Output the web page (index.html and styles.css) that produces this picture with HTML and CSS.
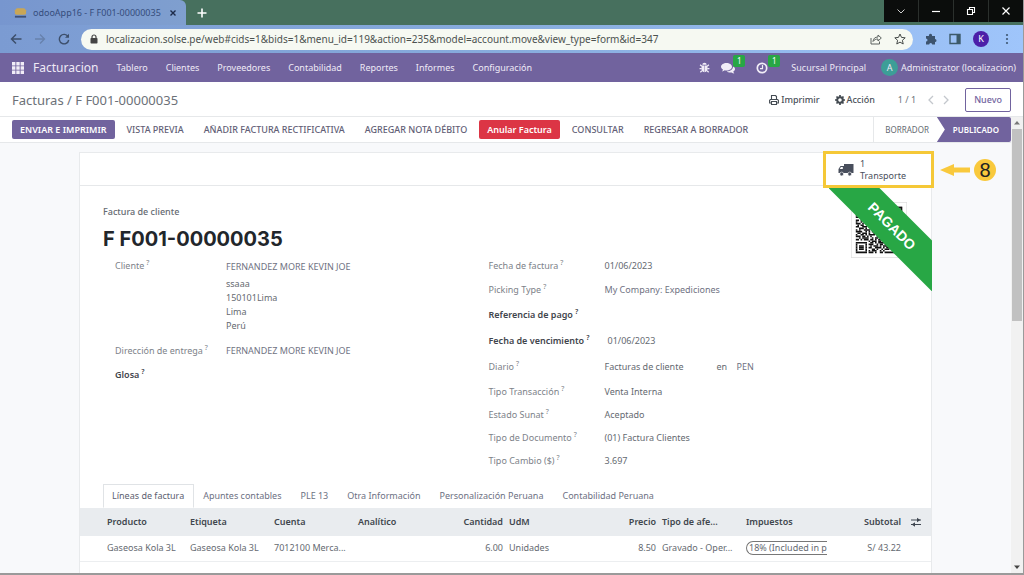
FILE: index.html
```html
<!DOCTYPE html>
<html lang="es">
<head>
<meta charset="utf-8">
<title>odooApp16 - F F001-00000035</title>
<link rel="stylesheet" href="styles.css">
</head>
<body>
<div class="window">
  <div class="tabstrip">
    <div class="browser-tab">
      <svg class="favicon" viewBox="0 0 14 12" aria-hidden="true"><path d="M3 1h8l2 2v4l-2 1H3L1 7V3z" fill="#c9a656"/><path d="M1 9h12v2H1z" fill="#3d5078"/></svg>
      <span class="browser-title">odooApp16 - F F001-00000035</span>
      <button class="plain tab-close" aria-label="Cerrar pestaña"><svg viewBox="0 0 8 8"><path d="M1.500 1.500l5 5M6.500 1.500l-5 5" stroke="#1d2b49" stroke-width="1.400"/></svg></button>
    </div>
    <button class="plain tab-new" aria-label="Nueva pestaña"><svg viewBox="0 0 10 10"><path d="M5 .5v9M.5 5h9" stroke="#fff" stroke-width="1.600"/></svg></button>
    <div class="window-controls">
      <button aria-label="Buscar pestañas"><svg viewBox="0 0 10 10"><path d="M1.500 3.500L5 7l3.500-3.500" stroke="#cfcfcf" fill="none"/></svg></button>
      <button aria-label="Minimizar"><svg viewBox="0 0 10 10"><path d="M1 5.500h8" stroke="#fff" stroke-width="1.200"/></svg></button>
      <button aria-label="Restaurar"><svg viewBox="0 0 10 10"><path d="M1.500 3.500h5v5h-5zM3.500 3.500v-2h5v5h-2" stroke="#fff" fill="none" stroke-width="1.100"/></svg></button>
      <button aria-label="Cerrar"><svg viewBox="0 0 10 10"><path d="M1.500 1.500l7 7M8.500 1.500l-7 7" stroke="#fff" stroke-width="1.200"/></svg></button>
    </div>
  </div>

  <div class="toolbar">
    <button class="plain" aria-label="Atrás"><svg class="i12" viewBox="0 0 12 12"><path d="M11.500 6H1.500M6 1.500L1.500 6 6 10.500" stroke="#3d4f6b" fill="none" stroke-width="1.500"/></svg></button>
    <button class="plain" aria-label="Adelante"><svg class="i12" viewBox="0 0 12 12"><path d="M1 6h9.500M6 1.500L10.500 6 6 10.500" stroke="#6781ac" fill="none" stroke-width="1.300"/></svg></button>
    <button class="plain" aria-label="Recargar"><svg class="i12" viewBox="0 0 12 12"><path d="M10 3.500A4.700 4.700 0 1 0 10.700 7" stroke="#3d4f6b" fill="none" stroke-width="1.400"/><path d="M11 .8v4H7z" fill="#3d4f6b"/></svg></button>
    <div class="address">
      <svg class="lock" viewBox="0 0 8 10" aria-hidden="true"><path d="M2 4.500V3a2 2 0 0 1 4 0v1.500" stroke="#444" fill="none" stroke-width="1.200"/><rect x=".5" y="4" width="7" height="5.500" rx=".8" fill="#444"/></svg>
      <input class="url" aria-label="Dirección" value="localizacion.solse.pe/web#cids=1&amp;bids=1&amp;menu_id=119&amp;action=235&amp;model=account.move&amp;view_type=form&amp;id=347">
      <button class="plain" aria-label="Compartir"><svg class="i12" viewBox="0 0 12 12"><path d="M1 5v6h8.500V8.500M3 8.500c.3-3 2-4.500 5-4.500V2l3.300 3L8 8V6C6 6 4.200 6.700 3 8.500z" stroke="#5d6360" fill="none"/></svg></button>
      <button class="plain" aria-label="Favorito"><svg class="i12" viewBox="0 0 12 12"><path d="M6 1l1.500 3.400 3.700.4-2.800 2.500.8 3.700L6 9.100 2.800 11l.8-3.700L.8 4.800l3.700-.4z" stroke="#454a48" fill="none"/></svg></button>
    </div>
    <button class="plain" aria-label="Extensiones"><svg class="i12" viewBox="0 0 12 12"><path d="M1 3h3a1.600 1.600 0 1 1 3 0h3v3a1.500 1.500 0 1 1 0 3v2.500H7.200a1.500 1.500 0 0 0-3 0H1V8.400a1.500 1.500 0 0 0 0-3z" fill="#3c536e"/></svg></button>
    <button class="plain" aria-label="Panel lateral"><svg class="i12" viewBox="0 0 12 12"><path d="M1 1.500h10v9H1z" stroke="#3c5a6a" fill="none" stroke-width="1.400"/><path d="M7.500 1.500H11v9H7.500z" fill="#3c5a6a"/></svg></button>
    <button class="profile" aria-label="Perfil">K</button>
    <button class="plain" aria-label="Menú"><svg class="i12" viewBox="0 0 12 12"><g fill="#3f5774"><circle cx="6" cy="2" r="1.100"/><circle cx="6" cy="6" r="1.100"/><circle cx="6" cy="10" r="1.100"/></g></svg></button>
  </div>

  <nav class="navbar">
    <button class="plain apps" aria-label="Aplicaciones"><svg class="i12" viewBox="0 0 12 12"><path d="M0 0h3.400v3.400H0zM4.300 0h3.400v3.400H4.300zM8.600 0H12v3.400H8.600zM0 4.300h3.400v3.400H0zM4.300 4.300h3.400v3.400H4.300zM8.600 4.300H12v3.400H8.600zM0 8.600h3.400V12H0zM4.300 8.600h3.400V12H4.300zM8.600 8.600H12V12H8.600z" fill="#f1edf7"/></svg></button>
    <a class="brand" href="#">Facturacion</a>
    <div class="menu">
      <a href="#">Tablero</a><a href="#">Clientes</a><a href="#">Proveedores</a><a href="#">Contabilidad</a><a href="#">Reportes</a><a href="#">Informes</a><a href="#">Configuración</a>
    </div>
    <div class="systray">
      <button class="plain" aria-label="Depurar"><svg class="bug" viewBox="0 0 10 10"><path d="M3 2.600a2 2 0 0 1 4 0zM2.300 3.200h2.500v6.200C3 9.200 2.300 8 2.300 6zM5.200 3.200h2.500V6c0 2-.7 3.200-2.500 3.400z" fill="#f1edf7"/><path d="M.5 6h2M7.500 6h2M1 2.500l1.500 1.300M9 2.500L7.500 3.800M1.200 9.300L2.700 8M8.800 9.300L7.300 8" stroke="#f1edf7" stroke-width="1.100"/></svg></button>
      <button class="plain tray" aria-label="Mensajes"><svg class="i14" viewBox="0 0 14 12"><path d="M5.500 1C8.500 1 11 2.700 11 4.800S8.500 8.500 5.500 8.500c-.6 0-1.200 0-1.700-.2-.8.700-1.800 1-2.900 1.100.6-.6 1-1.100 1.100-1.900C.8 6.900 0 5.900 0 4.800 0 2.700 2.500 1 5.500 1z" fill="#f1edf7"/><path d="M12 4.500c1.200.6 2 1.500 2 2.600s-.7 1.900-1.700 2.500c.1.700.5 1.300 1 1.900-1 0-2-.5-2.800-1.100-1.700.3-3.600 0-4.700-.9C9.500 9.300 12 7.500 12 4.500z" fill="#f1edf7"/></svg><span class="count">1</span></button>
      <button class="plain tray" aria-label="Actividades"><svg class="i12" viewBox="0 0 12 12"><circle cx="6" cy="6" r="4.700" stroke="#f1edf7" stroke-width="1.700" fill="none"/><path d="M6.500 3v3.700H4" stroke="#f1edf7" stroke-width="1.200" fill="none"/></svg><span class="count">1</span></button>
      <a class="company" href="#">Sucursal Principal</a>
      <a class="user" href="#"><span class="avatar">A</span>Administrator (localizacion)</a>
    </div>
  </nav>

  <header class="control">
    <div class="crumbs"><a href="#">Facturas</a> / <span>F F001-00000035</span></div>
    <div class="control-actions">
      <button class="plain action"><svg class="i10" viewBox="0 0 10 10"><path d="M2.500 4.500v-4h4l1 1v3M2.500 8H.6V5.200L1.500 4.500h7l.9.700V8H7.500M2.500 6.500h5v3h-5z" stroke="#444b52" fill="none" stroke-width="1.100"/></svg>Imprimir</button>
      <button class="plain action"><svg class="i10" viewBox="0 0 10 10"><circle cx="5" cy="5" r="2.800" stroke="#444b52" stroke-width="2.100" fill="none"/><path d="M5 0v2M5 8v2M0 5h2M8 5h2M1.500 1.500l1.300 1.300M7.200 7.200l1.300 1.300M8.500 1.500L7.200 2.800M2.800 7.200L1.500 8.500" stroke="#444b52" stroke-width="1.700"/></svg>Acción</button>
      <span class="pager">1 / 1</span>
      <button class="plain prev" aria-label="Anterior"><svg class="i10" viewBox="0 0 10 10"><path d="M7 1L3 5l4 4" stroke="#c3c7cc" fill="none" stroke-width="1.300"/></svg></button>
      <button class="plain" aria-label="Siguiente"><svg class="i10" viewBox="0 0 10 10"><path d="M3 1l4 4-4 4" stroke="#c3c7cc" fill="none" stroke-width="1.300"/></svg></button>
      <button class="new">Nuevo</button>
    </div>
  </header>

  <div class="viewport">
    <main class="form">
      <div class="statusbar">
        <button class="btn primary">ENVIAR E IMPRIMIR</button>
        <button class="btn">VISTA PREVIA</button>
        <button class="btn">AÑADIR FACTURA RECTIFICATIVA</button>
        <button class="btn">AGREGAR NOTA DÉBITO</button>
        <button class="btn danger">Anular Factura</button>
        <button class="btn">CONSULTAR</button>
        <button class="btn">REGRESAR A BORRADOR</button>
        <div class="stages"><span class="stage">BORRADOR</span><span class="stage current">PUBLICADO</span></div>
      </div>

      <div class="canvas">
        <section class="sheet">
          <div class="button-box">
            <button class="stat">
              <svg class="truck" viewBox="0 0 16 14" aria-hidden="true"><path d="M6 1h9.500v9H6zM.5 6l2-3H6v7H.5z" fill="#484e5c"/><path d="M1.700 6l1.200-1.900h1.900V6z" fill="#fff"/><circle cx="3.700" cy="11" r="1.900" fill="#484e5c" stroke="#fff" stroke-width=".6"/><circle cx="11.700" cy="11" r="1.900" fill="#484e5c" stroke="#fff" stroke-width=".6"/></svg>
              <span>1<br>Transporte</span>
            </button>
            <div class="callout"><svg class="arrow" viewBox="0 0 30 14" aria-hidden="true"><path d="M0 7l14-6v3.500h16v5H14V13z" fill="#f9c93c"/></svg><span class="step">8</span></div>
          </div>

          <div class="sheet-body">
            <svg class="qr" viewBox="-3 -3 35 35" aria-label="Código QR">
              <path d="M-3-3h35v35H-3z" fill="#fff" stroke="#dedede" stroke-width=".8"/>
              <g stroke="#111" stroke-width="1">
                <path d="M0 .5h29" stroke-dasharray="7 2 1 1 3 1 2 1 3 1"/><path d="M0 1.500h29" stroke-dasharray="1 5 1 2 2 1 1 3 2 1"/><path d="M0 2.500h29" stroke-dasharray="1 1 3 1 1 1 3 2 1 1"/><path d="M0 3.500h29" stroke-dasharray="1 1 3 1 1 2 1 1 2 1 3 1"/><path d="M0 4.500h29" stroke-dasharray="1 1 3 1 1 1 2 3 1 2"/><path d="M0 5.500h29" stroke-dasharray="1 5 1 3 1 1 2 2"/><path d="M0 6.500h29" stroke-dasharray="7 1 1 1 1 1 1 1"/><path d="M8 7.500h21" stroke-dasharray="2 1 1 2 3 1"/>
                <path d="M0 8.500h29" stroke-dasharray="2 1 4 1 1 2 3 2"/><path d="M0 9.500h29" stroke-dasharray="1 2 1 1 3 2 1 1"/><path d="M0 10.500h29" stroke-dasharray="3 1 1 1 1 2 4 1"/><path d="M1 11.500h28" stroke-dasharray="1 1 2 2 3 1 1 3"/><path d="M0 12.500h29" stroke-dasharray="2 2 3 1 1 1 2 1"/><path d="M2 13.500h27" stroke-dasharray="3 1 1 2 2 1"/><path d="M0 14.500h29" stroke-dasharray="1 1 1 2 4 1 2 1"/><path d="M0 15.500h29" stroke-dasharray="4 2 1 1 1 1 3 2"/><path d="M1 16.500h28" stroke-dasharray="2 1 3 1 1 2"/><path d="M0 17.500h29" stroke-dasharray="1 2 2 1 1 1 4 2"/><path d="M0 18.500h29" stroke-dasharray="3 1 2 1 1 1 1 3"/><path d="M2 19.500h27" stroke-dasharray="1 1 4 2 1 1 2 1"/><path d="M0 20.500h29" stroke-dasharray="2 1 1 1 3 1"/>
                <path d="M8 21.500h21" stroke-dasharray="1 1 3 1 2 2"/><path d="M0 22.500h29" stroke-dasharray="7 2 2 1 1 1 4 1"/><path d="M0 23.500h29" stroke-dasharray="1 5 1 1 3 2 1 1 2 1"/><path d="M0 24.500h29" stroke-dasharray="1 1 3 1 1 2 1 1 3 1"/><path d="M0 25.500h29" stroke-dasharray="1 1 3 1 1 1 2 2 4 1"/><path d="M0 26.500h29" stroke-dasharray="1 1 3 1 1 3 2 1 1 2"/><path d="M0 27.500h29" stroke-dasharray="1 5 1 1 1 1 3 2 1 1"/><path d="M0 28.500h29" stroke-dasharray="7 1 3 1 1 2 2 1"/>
              </g>
              <path d="M22 0h7v7h-7z" fill="#fff"/><path d="M22.500.5h6v6h-6z" fill="none" stroke="#111"/><path d="M24 2h3v3h-3z" fill="#111"/>
            </svg>
            <div class="ribbon"><span>PAGADO</span></div>

            <p class="kind">Factura de cliente</p>
            <h1>F F001-00000035</h1>

            <div class="groups">
              <dl class="group left">
                <dt>Cliente<sup>?</sup></dt>
                <dd class="client"><a href="#">FERNANDEZ MORE KEVIN JOE</a><address>ssaaa<br>150101Lima<br>Lima<br>Perú</address></dd>
                <dt>Dirección de entrega<sup>?</sup></dt><dd><a href="#">FERNANDEZ MORE KEVIN JOE</a></dd>
                <dt class="strong">Glosa<sup>?</sup></dt><dd></dd>
              </dl>
              <dl class="group right">
                <dt>Fecha de factura<sup>?</sup></dt><dd>01/06/2023</dd>
                <dt>Picking Type<sup>?</sup></dt><dd><a href="#">My Company: Expediciones</a></dd>
                <dt class="strong tall">Referencia de pago<sup>?</sup></dt><dd></dd>
                <dt class="strong tall">Fecha de vencimiento<sup>?</sup></dt><dd class="editable">01/06/2023</dd>
                <dt class="tall">Diario<sup>?</sup></dt><dd class="journal"><span>Facturas de cliente</span><span>en</span><a href="#">PEN</a></dd>
                <dt class="short">Tipo Transacción<sup>?</sup></dt><dd>Venta Interna</dd>
                <dt class="short">Estado Sunat<sup>?</sup></dt><dd>Aceptado</dd>
                <dt class="short">Tipo de Documento<sup>?</sup></dt><dd>(01) Factura Clientes</dd>
                <dt class="short">Tipo Cambio ($)<sup>?</sup></dt><dd>3.697</dd>
              </dl>
            </div>

            <div class="tabs" role="tablist">
              <button class="tab active" role="tab">Líneas de factura</button><button class="tab" role="tab">Apuntes contables</button><button class="tab" role="tab">PLE 13</button><button class="tab" role="tab">Otra Información</button><button class="tab" role="tab">Personalización Peruana</button><button class="tab" role="tab">Contabilidad Peruana</button>
            </div>
          </div>

          <table class="lines">
            <colgroup><col class="c-first"><col class="c-wide"><col class="c-wide"><col class="c-mid"><col class="c-qty"><col class="c-wide"><col class="c-price"><col class="c-wide"><col class="c-wide"><col class="c-mid"><col class="c-opt"></colgroup>
            <thead><tr><th>Producto</th><th>Etiqueta</th><th>Cuenta</th><th>Analítico</th><th class="num">Cantidad</th><th>UdM</th><th class="num">Precio</th><th>Tipo de afe...</th><th>Impuestos</th><th class="num">Subtotal</th>
              <th class="opt"><button class="plain" aria-label="Columnas"><svg class="i10" viewBox="0 0 10 10"><path d="M0 3h10M0 7.500h10" stroke="#3f4650" stroke-width="1.100"/><path d="M6 .7L9.300 3 6 5.300zM4 5.200L.7 7.500 4 9.800z" fill="#3f4650"/></svg></button></th></tr></thead>
            <tbody><tr><td>Gaseosa Kola 3L</td><td>Gaseosa Kola 3L</td><td>7012100 Merca...</td><td></td><td class="num">6.00</td><td>Unidades</td><td class="num">8.50</td><td>Gravado - Oper...</td><td class="taxes"><span class="tax">18% (Included in p</span></td><td class="num">S/ 43.22</td><td></td></tr></tbody>
          </table>
        </section>
      </div>
    </main>
    <div class="scrollbar" aria-hidden="true">
      <svg viewBox="0 0 12 12"><path d="M3 7.500L6 4l3 3.500z" fill="#777"/></svg>
      <div class="thumb"></div>
      <svg viewBox="0 0 12 12"><path d="M3 4.500L6 8l3-3.500z" fill="#444"/></svg>
    </div>
  </div>
</div>
</body>
</html>
```
FILE: styles.css
```css
* { box-sizing: border-box; }
body { margin: 0; font: 9px/14px "Noto Sans", "Open Sans", sans-serif; color: #656a71; background: #fff; }
a { color: inherit; text-decoration: none; }
button { font: inherit; color: inherit; cursor: pointer; white-space: nowrap; }
svg { display: block; flex: none; }
.plain { border: 0; background: none; padding: 0; display: flex; align-items: center; }
.i10 { width: 10px; height: 10px; }
.i12 { width: 12px; height: 12px; }
.i14 { width: 14px; height: 12px; }

.window { height: 100vh; display: flex; flex-direction: column; overflow: hidden; border-right: 1px solid #9a9a9a; border-bottom: 2px solid #9a9a9a; }

.tabstrip { height: 25px; flex: none; display: flex; align-items: stretch; background: #47705e; }
.browser-tab { width: 186px; display: flex; align-items: center; gap: 6px; padding: 0 9px 0 14px; background: linear-gradient(90deg, #7796cf, #7f9fcf); border-radius: 0 6px 0 0; color: #354d7c; }
.favicon { width: 13px; height: 12px; }
.browser-title { flex: 1; white-space: nowrap; }
.tab-close svg { width: 8px; height: 8px; }
.tab-new { margin-left: 11px; }
.tab-new svg { width: 10px; height: 10px; }
.window-controls { margin-left: auto; height: 22px; display: flex; gap: 1px; background: #2b302d; }
.window-controls button { width: 34px; border: 0; padding: 0; background: #0b0d0c; display: flex; align-items: center; justify-content: center; }
.window-controls svg { width: 10px; height: 10px; }

.toolbar { height: 28px; flex: none; display: flex; align-items: center; gap: 12px; padding: 0 10px; background: linear-gradient(90deg, #7b9bd2, #88acdd 50%, #9fc5fb); }
.address { flex: 1; height: 21px; margin-left: -1px; border-radius: 11px; background: #f6f9f2; display: flex; align-items: center; gap: 8px; padding: 0 3px 0 9px; }
.lock { width: 8px; height: 10px; }
.url { flex: 1; border: 0; padding: 0; background: none; font: 10px/14px "Noto Sans", sans-serif; color: #4c5250; }
.address .plain { margin-right: 4px; }
.profile { width: 16px; height: 16px; border: 0; border-radius: 50%; padding: 0; background: #4c1fa8; color: #fff; font-size: 9px; line-height: 16px; }

.navbar { height: 29px; flex: none; display: flex; align-items: center; padding: 0 7px 0 12px; background: #71639e; color: #efeaf6; white-space: nowrap; }
.brand { margin-left: 9px; font-size: 12px; }
.menu { display: flex; gap: 18px; margin-left: 18px; }
.systray { margin-left: auto; display: flex; align-items: center; gap: 11px; }
.bug { width: 11px; height: 11px; }
.tray { position: relative; width: 24px; }
.count { position: absolute; right: 0; top: -7px; width: 12px; height: 12px; border-radius: 2px; background: #28a745; color: #fff; font-size: 8px; line-height: 12px; text-align: center; }
.user { display: flex; align-items: center; gap: 3px; margin-left: 4px; }
.avatar { width: 17px; height: 17px; border-radius: 50%; background: #3d9e97; line-height: 17px; text-align: center; }

.control { height: 34px; flex: none; display: flex; align-items: center; justify-content: space-between; padding: 1px 12px 0; color: #6c7178; white-space: nowrap; }
.crumbs { font-size: 13px; }
.control-actions { display: flex; align-items: center; }
.action { gap: 2px; margin-right: 15px; font-weight: 500; color: #4a5058; }
.pager { margin: 0 10px 0 8px; }
.prev { margin-right: 5px; }
.new { height: 24px; margin-left: 14px; padding: 0 8px; border: 1px solid #71639e; border-radius: 2px; background: #fff; color: #71639e; font-weight: 500; }

.viewport { flex: 1; min-height: 0; display: flex; border-top: 1px solid #e6e8ea; }
.form { flex: 1; min-width: 0; display: flex; flex-direction: column; }
.statusbar { height: 26px; flex: none; display: flex; align-items: center; gap: 4px; padding-left: 12px; border-bottom: 1px solid #e6e8ea; background: #fff; }
.btn { height: 19px; padding: 0 8px; border: 0; border-radius: 2px; background: none; color: #625e76; font-weight: 500; }
.primary { background: #71639e; color: #fff; font-weight: 600; }
.danger { background: #dc3545; color: #fff; font-weight: 600; }
.stages { margin-left: auto; align-self: stretch; display: flex; font-size: 8px; line-height: 25px; border-left: 1px solid #e6e8ea; }
.stage { padding: 0 8px 0 11px; }
.current { padding: 0 12px 0 16px; background: #71639e; color: #fff; font-weight: 600; border-radius: 0 2px 2px 0; clip-path: polygon(0 0, 100% 0, 100% 100%, 0 100%, 8px 50%); }

.canvas { flex: 1; min-height: 0; padding: 9px 79px 0; background: #f8f9fb; }
.sheet { min-height: 100%; background: #fff; border: 1px solid #e8eaec; border-bottom: 0; }
.button-box { position: relative; height: 33px; border-bottom: 1px solid #e6e8ea; }
.stat { position: absolute; z-index: 2; right: -3px; top: -2px; width: 111px; height: 37px; border: 3px solid #f5c837; background: #fff; display: flex; align-items: center; gap: 6px; padding: 0 12px; text-align: left; line-height: 12px; color: #4a4f5c; }
.truck { width: 16px; height: 14px; }
.callout { position: absolute; right: -65px; top: 6px; display: flex; align-items: center; gap: 4px; }
.arrow { width: 30px; height: 14px; }
.step { width: 22px; height: 22px; border-radius: 50%; background: #f9c93c; color: #222; font: 20px/22px "Liberation Sans", sans-serif; text-align: center; }

.sheet-body { position: relative; padding: 18px 24px 0 23px; }
.qr { position: absolute; right: 24px; top: 16px; width: 56px; height: 56px; }
.ribbon { position: absolute; right: -1px; top: 0; width: 103px; height: 105px; overflow: hidden; }
.ribbon span { position: absolute; right: -50px; top: 22px; width: 180px; height: 36px; transform: rotate(45deg); background: #28a745; color: #fff; font: bold 14px/36px "Liberation Sans", sans-serif; text-align: center; }
.kind { margin: 0; line-height: 16px; font-weight: 500; }
h1 { margin: 6px 0 2px; font: bold 20px/26px Inter, sans-serif; color: #22262b; }

.groups { display: grid; grid-template-columns: 374fr 419fr; padding-left: 12px; }
.group { margin: 0; display: grid; align-content: start; align-items: center; white-space: nowrap; }
.left { grid-template-columns: 111px 1fr; }
.right { grid-template-columns: 116px 1fr; }
dt { height: 24px; line-height: 24px; color: #7d8289; align-self: start; }
dt.short { height: 23px; line-height: 23px; }
dt.tall { height: 26px; line-height: 26px; }
dt.strong { color: #3f454c; font-weight: 600; }
dd { margin: 0; }
dd a { color: #6f7282; }
sup { margin-left: 2px; font-size: 7px; line-height: 0; }
.client { padding: 6px 0; }
address { margin-top: 3px; font-style: normal; }
.editable { padding-left: 3px; }
.journal { display: grid; grid-template-columns: 112px 20px auto; justify-content: start; }

.tabs { display: flex; margin-top: 12px; }
.tab { height: 24px; padding: 0 9px 0 8px; border: 1px solid transparent; background: none; color: #6d7183; }
.tab.active { background: #fff; border-color: #e0e3e6; border-bottom-color: #fff; color: #5c6070; }

.lines { width: 100%; table-layout: fixed; border-collapse: collapse; white-space: nowrap; }
.c-first { width: 107px; }
.c-wide { width: 84px; }
.c-mid { width: 77px; }
.c-qty { width: 74px; }
.c-price { width: 69px; }
.c-opt { width: 27px; }
.lines th { height: 28px; padding: 0 3px; background: #e9ecef; text-align: left; font-weight: 600; color: #40464d; }
.lines td { height: 25px; padding: 0 3px; border-bottom: 1px solid #eceef0; }
.lines th:first-child, .lines td:first-child { padding-left: 27px; }
.lines .num { text-align: right; }
.lines .opt { padding-left: 7px; }
.lines .taxes { padding-right: 0; }
.tax { display: block; height: 14px; border: 1px solid #777; border-right: 0; border-radius: 7px 0 0 7px; padding-left: 2px; line-height: 12px; }

.scrollbar { width: 12px; flex: none; display: flex; flex-direction: column; background: #f1f1f1; }
.scrollbar svg { width: 12px; height: 12px; }
.scrollbar svg:last-child { margin-top: auto; }
.thumb { height: 42%; margin: 0 1px; background: #c1c1c1; }
```
